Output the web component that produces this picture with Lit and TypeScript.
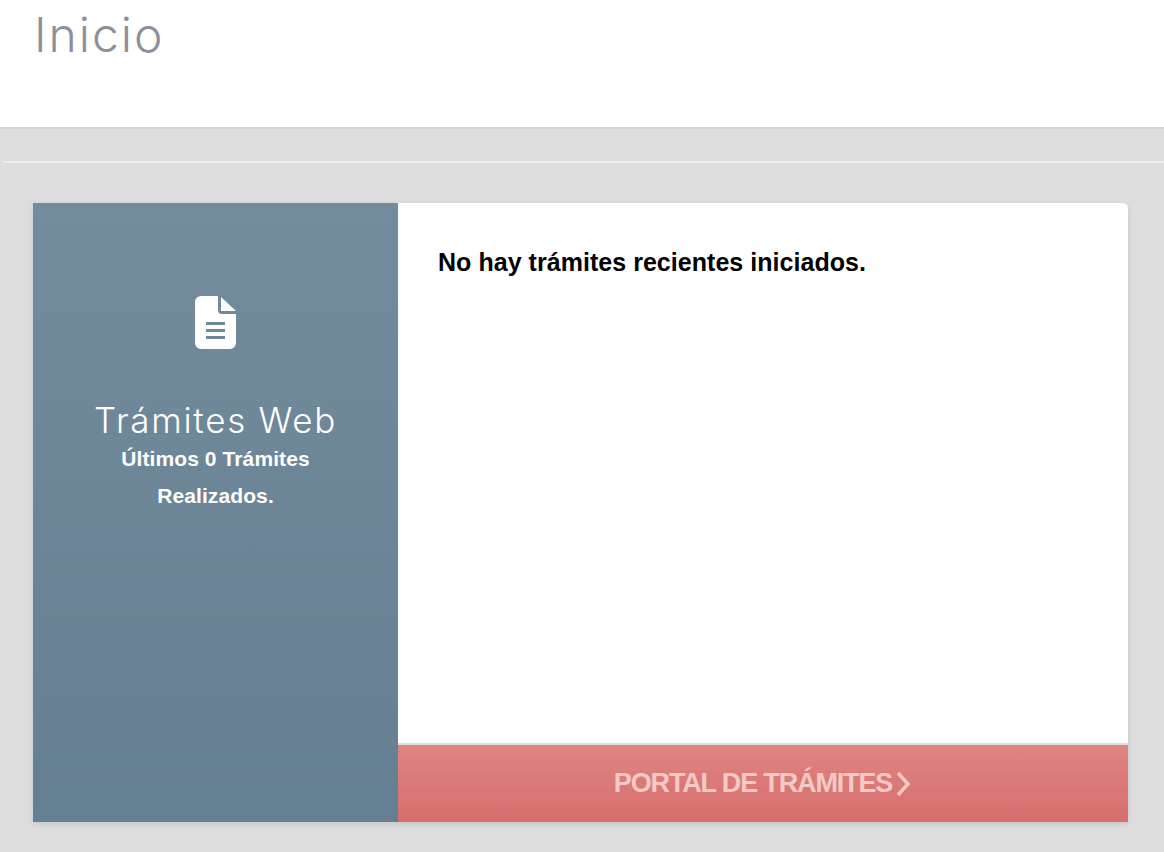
import { LitElement, html, css } from "lit";
import { customElement } from "lit/decorators.js";

@customElement("app-root")
export class AppRoot extends LitElement {
  static styles = css`
    :host {
      display: block;
      width: 1164px;
      height: 852px;
      overflow: hidden;
      background: #dddddd;
      font-family: "Liberation Sans", Arial, sans-serif;
    }
    .head {
      height: 127px;
      background: #fff;
      border-bottom: 2px solid #d5d5d5;
      box-sizing: content-box;
      padding-left: 34px;
    }
    h1 {
      margin: 0;
      padding-top: 6px;
      font-family: Inter, sans-serif;
      font-weight: 300;
      font-size: 48px;
      line-height: 58px;
      letter-spacing: 2px;
      color: #8d8f9c;
    }
    .body {
      padding: 32px 36px 0 33px;
    }
    .rule {
      height: 2px;
      margin: 0 -36px 0 -30px;
      background: #ececec;
    }
    .card {
      margin-top: 40px;
      height: 619px;
      display: flex;
      background: #fff;
      border-radius: 0 5px 0 0;
      box-shadow: 0 2px 5px rgba(0, 0, 0, 0.1);
      overflow: hidden;
    }
    .side {
      width: 365px;
      flex: none;
      box-sizing: border-box;
      padding-top: 93px;
      background: linear-gradient(180deg, #738c9d, #657f92);
      color: #fff;
      display: flex;
      flex-direction: column;
      align-items: center;
      text-align: center;
    }
    .side svg {
      display: block;
      width: 41px;
      height: 53px;
    }
    .side h2 {
      margin: 44px 0 0;
      font-family: Inter, sans-serif;
      font-weight: 300;
      font-size: 35px;
      line-height: 54px;
      letter-spacing: 1.7px;
      white-space: nowrap;
    }
    .side p {
      margin: -7px 0 0;
      width: 220px;
      font-size: 21px;
      font-weight: bold;
      line-height: 37px;
      letter-spacing: 0.1px;
    }
    .main {
      flex: 1;
      display: flex;
      flex-direction: column;
      min-width: 0;
    }
    .content {
      flex: 1;
      padding: 43px 40px 0;
      font-size: 25px;
      line-height: 32px;
      font-weight: bold;
      letter-spacing: 0.04px;
      color: #000;
    }
    .foot {
      height: 77px;
      flex: none;
      border-top: 2px solid #e0dcdc;
      background: linear-gradient(180deg, #df8580, #d66e6c);
      display: flex;
      align-items: center;
      justify-content: center;
      gap: 3px;
      color: #f5c9c7;
      font-size: 27px;
      font-weight: bold;
      letter-spacing: -1.15px;
    }
    .foot svg {
      display: block;
      width: 17px;
      height: 26px;
    }
  `;

  render() {
    return html`
      <div class="head"><h1>Inicio</h1></div>
      <div class="body">
        <div class="rule"></div>
        <div class="card">
          <div class="side">
            <svg viewBox="0 0 41 53" aria-hidden="true">
              <path
                fill="#fff"
                d="M6 0H23V14a4 4 0 0 0 4 4H41V47a6 6 0 0 1-6 6H6a6 6 0 0 1-6-6V6a6 6 0 0 1 6-6Z"
              />
              <path fill="#fff" d="M26 1L41 15H26Z" />
              <path fill="#6f8899" d="M11 26H30V29H11ZM11 33H30V36H11ZM11 40H30V43H11Z" />
            </svg>
            <h2>Trámites Web</h2>
            <p>Últimos 0 Trámites Realizados.</p>
          </div>
          <div class="main">
            <div class="content">No hay trámites recientes iniciados.</div>
            <div class="foot">
              <span>PORTAL DE TRÁMITES</span>
              <svg viewBox="0 0 17 26" aria-hidden="true">
                <path d="M3 2L13 13L3 24" fill="none" stroke="#f5c9c7" stroke-width="3.4" />
              </svg>
            </div>
          </div>
        </div>
      </div>
    `;
  }
}
